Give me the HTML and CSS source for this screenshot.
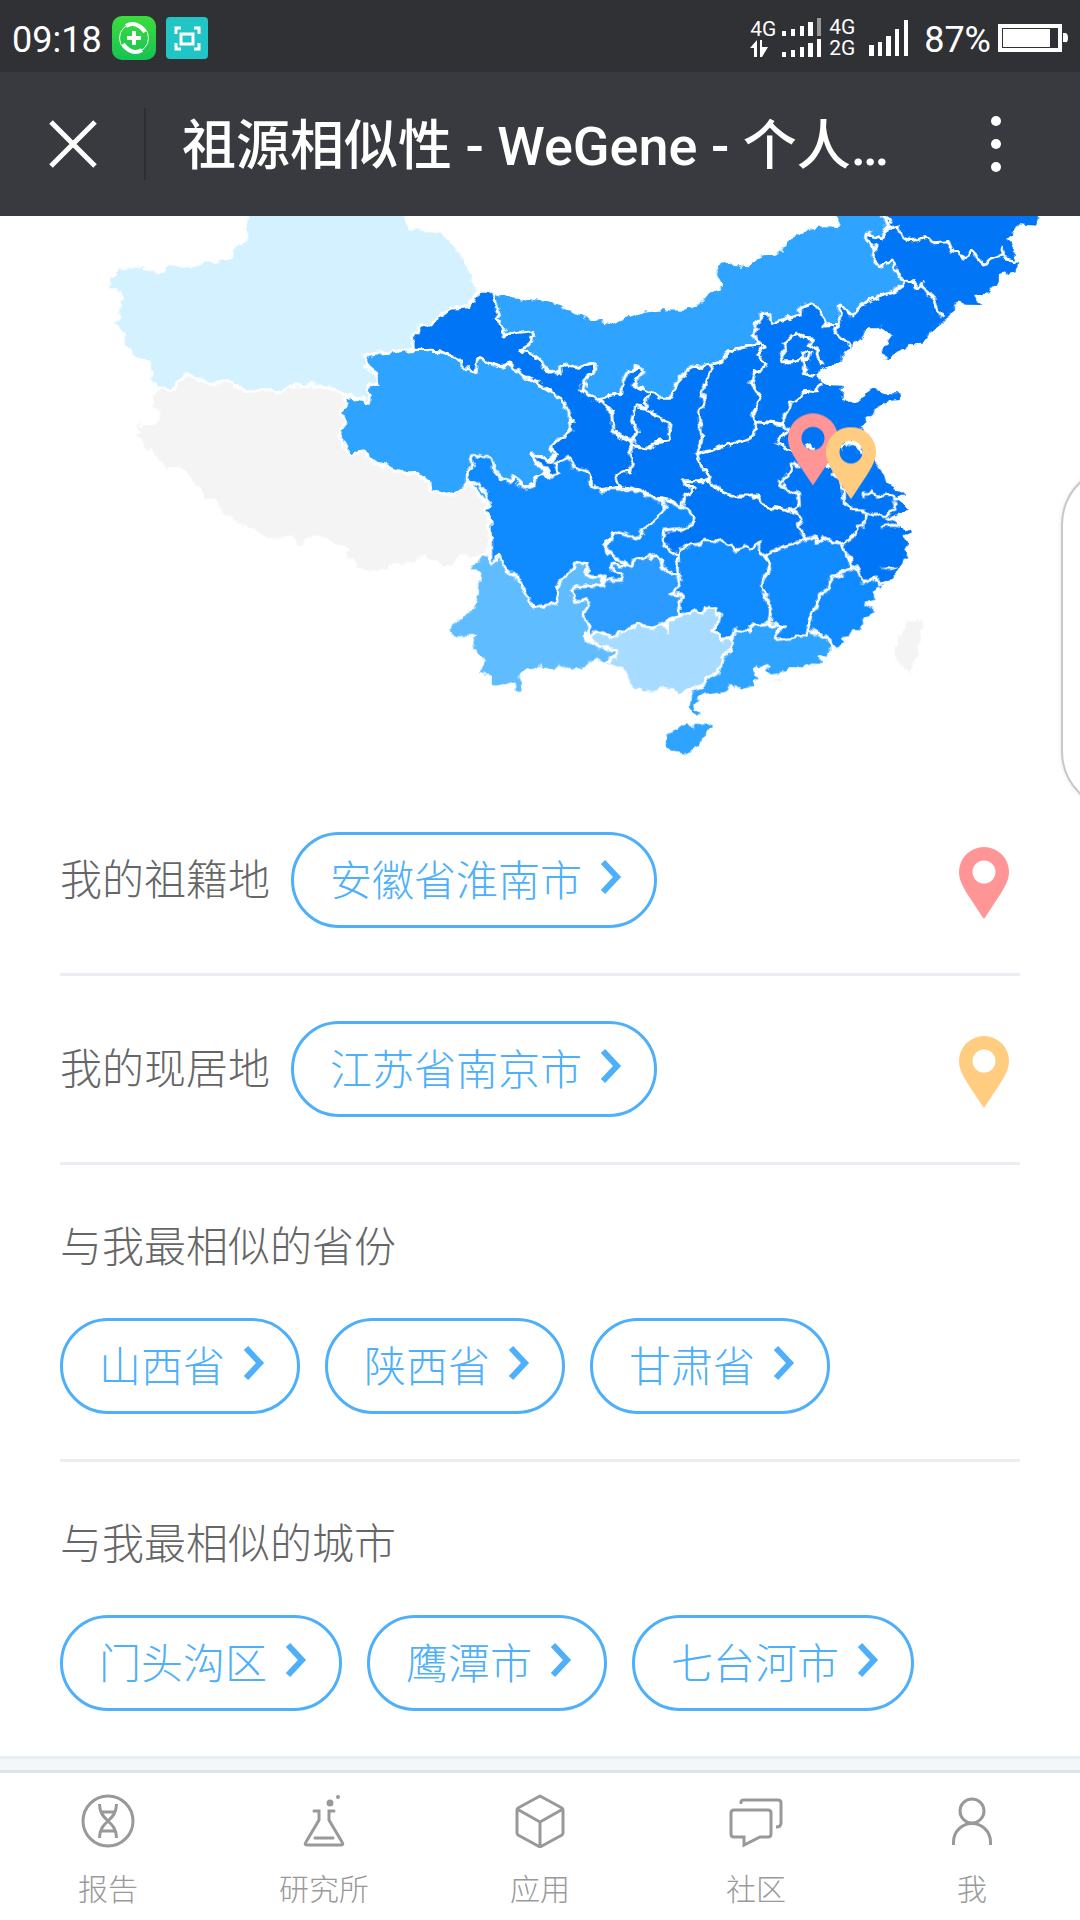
FILE: index.html
```html
<!DOCTYPE html>
<html lang="zh-CN">
<head>
    <meta charset="UTF-8">
    <meta name="viewport" content="width=device-width, initial-scale=1.0">
    <title>祖源相似性 - WeGene</title>
    <link rel="stylesheet" href="styles.css">
</head>
<body>
    <svg class="sprite" width="0" height="0" aria-hidden="true">
        <symbol id="pin" viewBox="0 0 50 72">
            <path fill-rule="evenodd" d="M25 0A25 25 0 0 0 0 25C0 36 7 45 25 72C43 45 50 36 50 25A25 25 0 0 0 25 0ZM25 13.500A11.500 11.500 0 0 1 25 36.500A11.500 11.500 0 0 1 25 13.500Z"/>
        </symbol>
        <symbol id="chevron" viewBox="0 0 22 36">
            <path d="M3 3L17 18L3 33" fill="none" stroke="currentColor" stroke-width="6"/>
        </symbol>
    </svg>

    <div class="status-bar">
        <span class="clock">09:18</span>
        <svg class="app-icon" width="44" height="44" viewBox="0 0 44 44">
            <defs>
                <linearGradient id="green" x1="0" y1="0" x2="0" y2="1">
                    <stop offset="0" stop-color="#3ddc3d"/>
                    <stop offset="1" stop-color="#14c354"/>
                </linearGradient>
            </defs>
            <rect width="44" height="44" rx="10" fill="url(#green)"/>
            <circle cx="22" cy="22" r="14.500" fill="none" stroke="#fff" stroke-width="1"/>
            <path d="M14 10Q24 4 33 16M30 34Q20 40 11 28" fill="none" stroke="#fff" stroke-width="4"/>
            <path d="M22 15v14M15 22h14" stroke="#fff" stroke-width="4"/>
        </svg>
        <svg class="app-icon" width="42" height="42" viewBox="0 0 42 42">
            <rect width="42" height="42" rx="4" fill="#22c5c6"/>
            <path d="M10 17v-6h5M28 11h5v6M33 26v6h-5M15 32h-5v-6M15 17h12v10H15z" fill="none" stroke="#fff" stroke-width="3"/>
        </svg>
        <div class="status-right">
            <div class="network">
                <span>4G</span>
                <svg width="18" height="18" viewBox="0 0 18 18" fill="#fff"><path d="M0 8L7 0V17H4V8ZM10 0H12V7H18L12 17H10Z"/></svg>
            </div>
            <svg width="40" height="42" viewBox="0 0 40 42" fill="#fff">
                <path d="M0 14h4v5H0zM9 12h4v7H9zM18 9h4v10h-4zM26 5h5v14h-5zM0 35h4v5H0zM9 33h4v7H9zM18 30h4v10h-4zM26 26h5v14h-5zM35 22h4v18h-4z"/>
                <path fill="#98989b" d="M35 1h4v18h-4z"/>
            </svg>
            <div class="network">
                <span>4G</span>
                <span>2G</span>
            </div>
            <svg class="signal" width="40" height="36" viewBox="0 0 40 36" fill="#fff">
                <path d="M0 25h5v11H0zM9 22h4v14H9zM17 16h5v20h-5zM26 9h4v27h-4zM35 0h4v36h-4z"/>
            </svg>
            <span class="percent">87%</span>
            <svg width="70" height="28" viewBox="0 0 70 28">
                <rect x="2" y="2" width="60" height="24" fill="none" stroke="#fff" stroke-width="4"/>
                <path d="M5 5h47v18H5zM65 9h2q3 0 3 5t-3 4h-2z" fill="#fff"/>
            </svg>
        </div>
    </div>

    <header class="title-bar">
        <button class="close" aria-label="关闭">
            <svg width="48" height="48" viewBox="0 0 48 48"><path d="M2 2L46 46M46 2L2 46" stroke="#fff" stroke-width="5"/></svg>
        </button>
        <h1>祖源相似性 - WeGene - 个人…</h1>
        <button class="more" aria-label="更多">
            <svg width="12" height="56" viewBox="0 0 12 56" fill="#fff"><circle cx="6" cy="5" r="5"/><circle cx="6" cy="28" r="5"/><circle cx="6" cy="51" r="5"/></svg>
        </button>
    </header>

    <main>
        <svg class="map" viewBox="0 648 3240 1713" role="img" aria-label="祖源相似性地图">
            <!-- gives province outlines an uneven edge -->
            <filter id="rough" filterUnits="userSpaceOnUse" x="0" y="600" width="3240" height="1761" color-interpolation-filters="sRGB">
                <feTurbulence type="fractalNoise" baseFrequency="0.04" numOctaves="2" seed="3" result="noise"/>
                <feDisplacementMap in="SourceGraphic" in2="noise" scale="24" xChannelSelector="R" yChannelSelector="G"/>
            </filter>
            <g filter="url(#rough)">
            <!-- Xinjiang, Tibet -->
            <g transform="translate(300 630)">
                <path class="region" fill="#d4f1ff" d="M441 -30L441 18 436 40 437 95 418 97 424 104 398 110 390 146 368 148 340 152 300 157 268 173 240 168 215 160 205 166 185 184 172 186 160 182 138 180 137 164 122 168 110 163 108 168 88 169 65 170 52 177 48 191 30 201 27 222 21 236 38 236 55 247 65 262 58 273 58 290 51 308 57 324 38 328 10 322 42 340 58 356 70 366 74 385 66 403 72 415 88 415 92 430 122 450 152 460 149 475 149 511 165 522 170 535 300 620 800 640 1000 500 1100 300 1125 255 1137 244 1117 218 1110 180 1077 123 1029 66 927 54 912 18 918 -30Z"/>
                <path class="region" fill="#f4f4f4" d="M170 535L158 548 151 578 160 594 174 603 170 630 150 643 130 645 110 626 108 645 118 665 104 686 122 690 135 718 150 722 170 745 172 755 188 768 200 780 203 791 218 776 235 780 258 790 265 805 285 828 302 840 318 866 340 868 352 878 352 895 370 915 395 920 388 934 418 940 428 957 440 950 445 964 460 962 490 980 525 987 575 983 588 998 578 1020 605 1002 640 986 665 985 690 998 705 1010 725 1010 744 1022 738 1042 765 1064 757 1080 800 1082 840 1088 870 1070 890 1065 930 1060 970 1042 1010 1062 1035 1075 1055 1065 1078 1034 1110 1047 1165 1030 1165 800 1000 700 860 600 775 564 757 552 745 560 722 549 685 531 630 524 590 525 565 528 548 543 525 547 515 539 485 540 455 545 425 538 402 526 397 515 370 509 340 522 323 522 305 512 285 505 260 490 245 507 230 516 228 530 215 543 200 534Z"/>
            </g>

            <!-- Inner Mongolia, then everything dark east of Gansu -->
            <g transform="translate(1800 630)">
                <path fill="#2ea3ff" d="M-320 252L-220 272 -195 270 -120 284 -105 302 -55 315 -25 332 8 330 10 338 40 344 75 324 130 308 190 301 250 302 297 285 325 253 370 232 368 218 348 190 362 158 385 155 400 167 443 172 468 155 488 133 530 131 562 108 563 93 575 78 605 75 612 66 640 55 680 52 714 55 719 40 710 18 710 -30 900 -30 920 250 700 450 300 650 0 650 -300 550Z"/>
                <path fill="#0075f5" d="M-10 572L0 565 65 553 68 515 85 480 110 468 128 485 100 527 150 550 180 565 212 565 228 520 275 470 300 475 335 460 370 452 388 418 430 412 480 403 462 372 470 340 488 315 505 310 512 340 560 325 600 315 602 290 635 278 655 295 675 345 715 343 712 290 725 285 755 318 800 275 850 255 910 228 912 208 898 190 875 150 840 170 822 150 825 115 800 90 800 72 845 85 860 58 850 -30 1320 -30 1315 18 1310 47 1255 43 1245 60 1222 80 1240 110 1245 150 1254 160 1250 185 1225 195 1210 185 1195 190 1194 215 1175 235 1165 250 1122 255 1140 285 1100 284 1078 272 1062 290 1040 327 1025 342 985 372 965 398 938 400 905 418 868 445 843 430 848 415 875 375 845 348 830 355 805 355 785 385 752 410 730 430 722 455 690 466 660 480 648 492 665 520 680 528 725 530 725 565 740 578 775 578 800 548 820 535 850 550 905 550 900 570 870 572 825 597 818 618 795 620 792 640 780 655 800 690 825 755 852 795 858 815 885 832 915 860 880 860 912 885 924 905 875 920 890 942 933 967 912 985 925 1000 915 1025 925 1045 908 1050 900 1070 875 1110 700 1150 400 1100 100 1050 -100 900Z"/>
                <path fill="#0075f5" d="M855 452L865 436 875 438Z"/>
            </g>
            <g transform="translate(990 810)">
                <path fill="#0075f5" d="M250 235L248 205 258 190 264 168 300 168 330 138 365 115 415 110 428 100 435 75 445 68 488 68 498 100 508 135 498 148 525 180 520 198 550 188 605 183 614 200 598 222 570 238 600 250 635 272 640 290 675 314 690 308 688 292 712 284 740 292 765 284 798 278 800 298 765 328 755 358 800 392 900 400 900 690 600 690 560 400 400 300Z"/>
                <path class="border" d="M250 235L248 205 258 190 264 168 300 168 330 138 365 115 415 110 428 100 435 75 445 66M488 68L498 100 508 135 498 148 525 180 520 198 550 188 605 183 614 200 598 222 570 238 600 250 635 272 640 290 675 314 690 308 688 292 712 284 740 292 765 284 798 278 800 298 765 328 755 358 800 392"/>
                <path class="region" fill="#2ea3ff" d="M105 258L110 290 138 312 147 342 115 348 110 362 125 372 122 397 105 395 68 382 40 388 50 400 35 428 42 450 38 475 25 495 40 520 50 543 70 552 100 545 130 575 180 595 225 612 265 610 300 640 302 662 338 672 365 672 398 658 415 630 470 700 615 640 640 610 645 600 635 590 615 575 603 553 620 552 655 572 678 555 658 535 690 505 725 480 722 462 730 455 715 430 705 400 680 375 640 350 600 325 585 325 540 282 520 288 500 290 450 263 442 275 438 308 415 300 370 258 325 242 260 238 220 241 175 247 135 250Z"/>
            </g>

            <!-- borders of the northern and eastern provinces -->
            <g transform="translate(1800 630)">
                <path class="border" d="M-10 572L0 565 65 553 68 515 85 480 93 482 110 468 128 485 115 505 100 527 130 540 150 550 180 565 212 565 218 545 228 520 250 495 275 470 300 475 318 462 335 460 370 452 375 435 388 418 400 422 430 412 455 408 480 403 462 372 470 340 488 315 505 310 512 340 535 335 560 325 580 320 600 315 602 290 635 278 655 295 665 320 675 345 715 343 722 320 712 290 725 285 755 318 775 295 800 275 825 265 850 255 885 245 910 228 912 208 898 205 898 190 875 150 840 170 822 150 825 115 800 90 800 72 845 85 860 58 850 18 850 -20"/>
                <path class="border" d="M0 570L35 605 38 660 65 682 90 695 118 665 108 645 95 635 108 590 138 595 140 565 152 550M138 600L165 615 210 635 205 690 165 695 155 715 98 708 95 690M98 708L85 735 100 760 92 785 65 785 50 795 55 830 0 842M55 830L100 835 120 838 165 865 210 870 240 895"/>
                <path class="border" d="M335 462L325 505 305 540 312 575 296 605 305 680 290 735 350 715 385 705 440 690 463 680 467 635M292 738L305 770 330 800 325 815 250 815 285 840 255 855 245 900M330 815L360 845 400 858 475 858 490 888 530 895 570 905"/>
                <path class="border" d="M480 403L495 412 470 430 498 460 490 480 465 485 452 520 482 565 455 615 467 635 500 638 548 645M665 525L650 542 610 545 600 560 575 580 550 625 550 645 560 660 530 700 580 730M595 372L610 385 640 388 628 405 655 420 650 435 670 465M595 372L575 380 555 400 562 410 542 435 548 455 590 455 608 440 608 425 632 430 625 445 608 448 615 468 610 490 645 500"/>
                <path class="border" d="M715 343L705 372 740 390 752 408M912 208L945 220 955 235 965 220 985 250 1005 270 1010 290 1030 320M850 22L875 30 862 45 860 56 895 48 910 85 935 92 985 82 1000 98 1045 95 1055 120 1075 128 1095 145 1112 122 1130 140 1150 165 1170 145 1205 135 1207 115 1212 145 1250 155M615 714L630 708 645 714M680 770L705 765 705 795"/>
                <path fill="#fff" d="M715 712L728 720 735 700 745 718 750 698 765 712 785 728 795 700 780 690 740 690Z"/>
            </g>
            <g transform="translate(2100 1200)">
                <path class="border" d="M300 205L275 190 270 215 240 245 265 280 295 275 298 315 270 330 305 355 295 378 318 420M385 195L405 200 400 225 420 245 430 270 430 300 455 320 455 330 500 335 545 348 560 350 585 325 580 300M490 275L495 290 510 275 530 288 560 285 590 295M428 432L465 408 468 380 492 375 500 340M548 380L575 375 600 378M560 362L600 345"/>
                <path fill="#fff" d="M535 505L595 500 580 510Z"/>
                <path class="region" fill="#0f8aff" d="M-65 470L-60 450 -30 435 0 432 15 418 65 425 105 448 140 435 148 450 180 425 178 455 195 470 212 500 185 545 198 590 212 625 208 672 150 680 148 695 105 688 98 708 60 730 30 720 20 640 -60 645 -62 585 -90 582 -60 560 -65 520Z"/>
                <path class="region" fill="#0f8aff" d="M195 468L220 455 250 440 315 420 345 408 350 430 375 415 400 430 428 432 430 450 455 480 455 505 415 525 390 530 385 570 355 585 355 610 330 655 322 700 315 710 235 718 220 712 255 685 208 672 212 625 198 590 185 555 188 540 212 505 208 485Z"/>
                <path class="region" fill="#0f8aff" d="M385 570L390 530 415 525 455 508 472 500 485 542 505 545 520 530 535 548 558 548 548 575 540 560 520 575 535 600 500 612 532 628 495 662 490 692 460 692 450 710 430 712 442 730 400 750 385 715 322 690 335 650 355 610 355 585Z"/>
                <path class="region" fill="#2ea3ff" d="M98 708L105 688 148 695 155 680 208 672 255 685 240 695 220 712 235 718 315 710 322 690 350 698 385 715 400 752 385 765 385 772 360 770 370 797 335 795 300 808 270 808 265 820 210 828 190 810 205 795 165 810 185 845 165 842 165 860 130 870 110 855 115 870 90 860 80 880 40 885 10 890 -12 912 -12 930 4 945 -15 952 -27 943 -38 920 -30 910 -28 870 5 862 20 835 58 815 65 775 92 750 95 715Z"/>
                <path fill="#f4f4f4" d="M650 655L655 662 668 660 665 700 655 765 635 800 629 830 622 808 600 798 588 770 587 735 605 700 625 665ZM215 842L230 832 247 842Z"/>
            </g>

            <!-- south-west -->
            <g transform="translate(1320 1320)">
                <path class="region" fill="#0f8aff" d="M83 120L82 100 100 78 90 62 95 47 120 47 152 55 162 90 185 115 210 125 220 110 250 145 285 132 290 108 315 100 330 108 355 98 345 70 385 52 400 80 445 92 455 135 480 150 520 145 550 150 600 152 640 175 680 182 735 205 765 230 760 255 720 268 670 275 670 310 715 350 712 400 690 400 600 420 520 450 350 500 285 500 152 372 152 340 150 240 135 205 148 198 135 160 118 135Z"/>
                <path class="border" d="M660 180L678 202 650 232 620 260 592 297 550 282 520 275 495 320 520 355 550 362 565 382M315 85L330 108M282 45L285 70 320 85 318 108M282 45L335 65 350 42"/>
                <path class="region" fill="#5fbdff" d="M155 372L180 342 200 400 225 400 240 425 255 455 270 490 285 503 350 490 352 435 385 400 412 368 443 372 440 405 460 412 490 405 485 435 440 438 392 450 405 485 435 478 450 490 428 530 450 560 435 585 440 605 470 605 480 622 530 632 525 650 490 670 475 660 445 672 440 685 400 692 385 684 372 692 358 682 335 695 302 682 285 698 258 694 240 708 250 730 248 760 228 760 222 730 180 742 152 735 150 710 110 702 122 680 133 660 105 645 95 605 102 590 60 590 33 592 28 562 45 545 75 520 100 503 110 480 116 402 92 392 88 372 115 362 125 342 142 340Z"/>
                <path class="region" fill="#2c9bff" d="M392 450L410 440 485 440 490 422 550 420 545 402 512 385 518 370 550 375 575 382 580 360 605 355 620 345 635 355 660 352 665 375 690 398 715 402 722 432 708 450 690 462 728 465 718 495 722 525 668 550 665 560 630 568 595 548 575 562 520 592 475 575 440 592 450 560 428 530 448 490 435 478 405 485Z"/>
                <path class="region" fill="#a7dbff" d="M440 600L475 575 520 592 535 578 575 562 595 548 630 568 665 550 685 575 685 550 722 525 765 515 790 520 800 502 828 505 830 525 842 525 832 555 812 575 835 578 845 598 875 595 872 630 845 655 838 695 800 715 785 742 752 750 715 765 700 752 675 745 650 752 635 760 605 752 575 742 555 715 565 695 545 685 520 682 490 672 528 650 530 630 480 622 465 605Z"/>
                <path fill="#2ea3ff" d="M677 885L700 872 722 862 735 853 760 858 765 852 800 850 813 860 795 880 782 905 760 928 728 938 700 932 678 922Z"/>
            </g>
            </g>

            <use href="#pin" class="pin-home" x="2364" y="1240" width="150" height="216"/>
            <use href="#pin" class="pin-now" x="2478" y="1281" width="150" height="216"/>
        </svg>

        <div class="drawer-handle"></div>

        <section class="row">
            <span class="label">我的祖籍地</span>
            <button class="pill">安徽省淮南市<svg><use href="#chevron"/></svg></button>
            <svg class="pin pin-home"><use href="#pin"/></svg>
        </section>

        <section class="row">
            <span class="label">我的现居地</span>
            <button class="pill">江苏省南京市<svg><use href="#chevron"/></svg></button>
            <svg class="pin pin-now"><use href="#pin"/></svg>
        </section>

        <section class="group">
            <h2 class="label">与我最相似的省份</h2>
            <div class="pills">
                <button class="pill">山西省<svg><use href="#chevron"/></svg></button>
                <button class="pill">陕西省<svg><use href="#chevron"/></svg></button>
                <button class="pill">甘肃省<svg><use href="#chevron"/></svg></button>
            </div>
        </section>

        <section class="group">
            <h2 class="label">与我最相似的城市</h2>
            <div class="pills">
                <button class="pill">门头沟区<svg><use href="#chevron"/></svg></button>
                <button class="pill">鹰潭市<svg><use href="#chevron"/></svg></button>
                <button class="pill">七台河市<svg><use href="#chevron"/></svg></button>
            </div>
        </section>
    </main>

    <nav class="tabs">
        <a href="#report">
            <svg viewBox="0 0 54 54"><circle cx="27" cy="27" r="25"/><path d="M18.500 10C18.500 28 35.500 26 35.500 44M35.500 10C35.500 28 18.500 26 18.500 44M20 18H34M20 37H34"/></svg>
            报告
        </a>
        <a href="#lab">
            <svg viewBox="0 0 54 54"><path d="M17 17H22V26L9 48Q7 51 10 51H44Q47 51 45 48L32 26V17H37M18 44H36" stroke-linecap="round"/><circle class="dot" cx="33" cy="9" r="3.500"/><circle class="dot" cx="41" cy="3" r="2"/></svg>
            研究所
        </a>
        <a href="#apps">
            <svg viewBox="0 0 54 54"><path d="M27 2L49 14Q50 15 50 16V39Q50 40 49 41L27 53L5 41Q4 40 4 39V16Q4 15 5 14ZM4 15L27 28L50 15M27 28V53" stroke-linejoin="round"/></svg>
            应用
        </a>
        <a href="#community">
            <svg viewBox="0 0 54 54"><path d="M5 16H39Q42 16 42 19V40Q42 43 39 43H31L15 51V43H5Q2 43 2 40V19Q2 16 5 16ZM12 10V8Q12 6 15 6H49Q52 6 52 9V29Q52 33 47 33"/></svg>
            社区
        </a>
        <a href="#me">
            <svg viewBox="0 0 54 54"><circle cx="27" cy="17" r="12"/><path d="M8.500 51V48A18.500 18.500 0 0 1 45.500 48V51"/></svg>
            我
        </a>
    </nav>
</body>
</html>
```

FILE: styles.css
```css
* {
    box-sizing: border-box;
}
body {
    margin: 0;
    background-color: #f3f7fa;
    font-family: Roboto, "Noto Sans CJK SC", sans-serif;
    font-weight: 300;
    color: #666;
}
button {
    padding: 0;
    border: none;
    background: none;
    font: inherit;
    color: inherit;
    cursor: pointer;
}
svg {
    display: block;
    flex: none;
}
.sprite {
    position: absolute;
}

/* status bar */
.status-bar {
    display: flex;
    align-items: center;
    gap: 10px;
    height: 72px;
    padding: 4px 12px 0;
    background-color: #303135;
    color: #fff;
    font-size: 36px;
    font-weight: 400;
}
.clock,
.percent {
    padding-top: 4px;
}
.status-right {
    display: flex;
    align-items: center;
    gap: 7px;
    margin-left: auto;
}
.network {
    display: flex;
    flex-direction: column;
    width: 25px;
    font-size: 21px;
    line-height: 21px;
}
.signal {
    margin: 0 8px;
}

/* title bar */
.title-bar {
    display: flex;
    align-items: center;
    height: 144px;
    background-color: #393a3f;
    color: #fff;
}
.close {
    display: flex;
    align-items: center;
    width: 146px;
    height: 72px;
    padding-left: 49px;
    border-right: 2px solid #2d2e32;
}
.title-bar h1 {
    flex: 1;
    margin: 0;
    padding: 0 0 6px 36px;
    font-size: 54px;
    font-weight: 500;
    white-space: nowrap;
}
.more {
    padding: 20px 78px;
}

/* content */
main {
    position: relative;
    overflow: hidden;
    margin-bottom: 11px;
    border-bottom: 3px solid #eaeef2;
    background-color: #fff;
}
.map {
    width: 100%;
}
.region,
.border {
    stroke: #fff;
    stroke-width: 9;
    stroke-linejoin: round;
}
.border {
    fill: none;
}
.drawer-handle {
    position: absolute;
    top: 249px;
    right: -102px;
    width: 121px;
    height: 346px;
    border: 2px solid #c8c8c8;
    border-radius: 60px;
    background-color: #fff;
    box-shadow: 0 0 4px rgba(0, 0, 0, 0.1);
}
.row,
.group {
    margin: 0 60px;
    padding: 45px 0;
    border-bottom: 3px solid #eaeef2;
}
.group:last-child {
    border-bottom: none;
}
.row {
    display: flex;
    align-items: center;
    gap: 21px;
}
.label {
    margin: 0;
    padding-top: 2px;
    font-size: 42px;
    font-weight: 300;
    line-height: 72px;
}
.pills {
    display: flex;
    gap: 25px;
    margin-top: 34px;
}
.pill {
    display: flex;
    align-items: center;
    gap: 18px;
    height: 96px;
    padding: 0 32px 6px 36px;
    border: 3px solid #4eaffa;
    border-radius: 48px;
    color: #4eaffa;
    font-size: 42px;
    white-space: nowrap;
}
.pill svg {
    width: 22px;
    height: 36px;
}
.pin {
    width: 50px;
    height: 72px;
    margin: 6px 11px 0 auto;
}
.pin-home {
    fill: #ff9595;
}
.pin-now {
    fill: #ffcc80;
}

/* bottom tabs */
.tabs {
    display: flex;
    border-top: 3px solid #dfe3e8;
    background-color: #fff;
}
.tabs a {
    display: flex;
    flex: 1;
    flex-direction: column;
    align-items: center;
    gap: 24px;
    padding: 21px 0 12px;
    color: #999;
    font-size: 30px;
    line-height: 36px;
    text-decoration: none;
}
.tabs svg {
    width: 54px;
    height: 54px;
    fill: none;
    stroke: #999;
    stroke-width: 3;
}
.tabs .dot {
    fill: #999;
    stroke: none;
}
```
